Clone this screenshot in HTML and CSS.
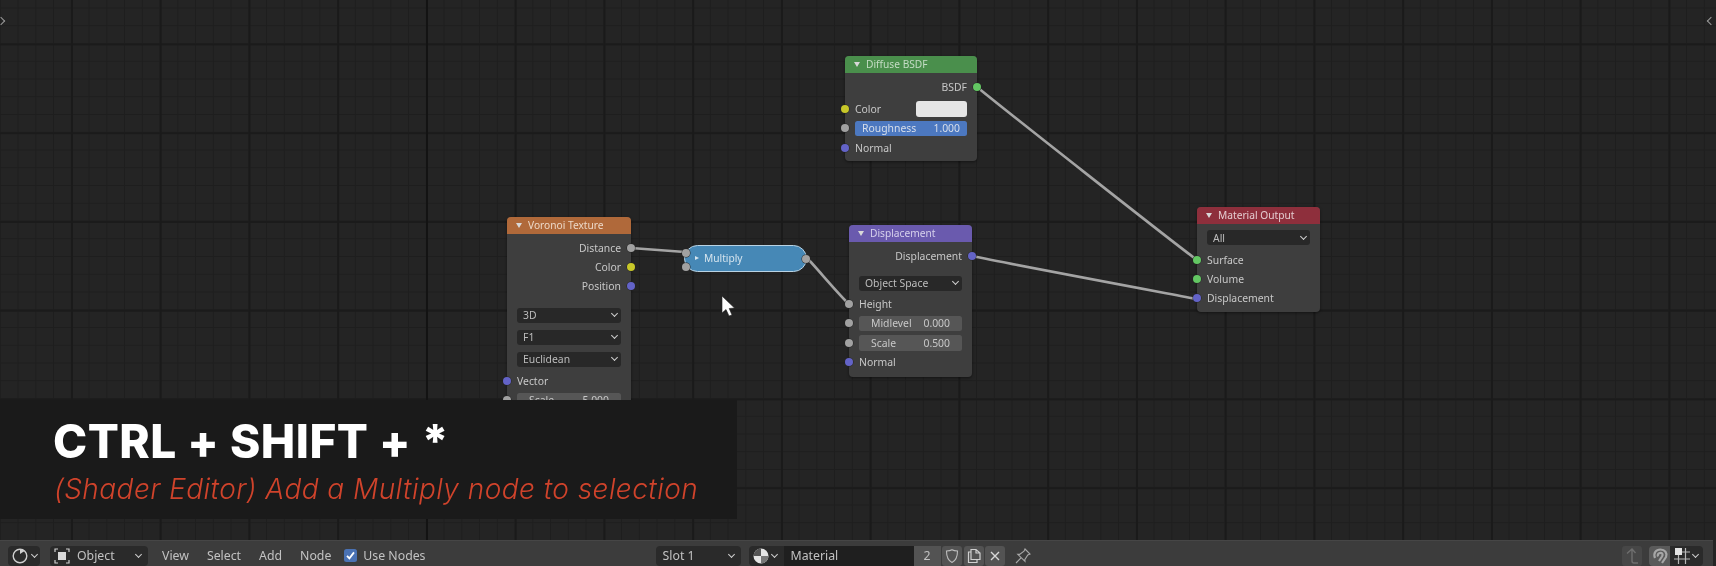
FILE: index.html
```html
<!DOCTYPE html>
<html lang="en">
<head>
<meta charset="utf-8">
<title>Shader Editor</title>
<link rel="stylesheet" href="styles.css">
</head>
<body>
<div class="app">
  <main class="canvas">
    <svg class="links" width="1716" height="540" viewBox="0 0 1716 540" fill="none">
      <path class="link" d="M631 248 L685 252"/>
      <path class="link" d="M807 258 C815 266 840 296 849 304"/>
      <path class="link" d="M977 87 C1000 106 1170 240 1197 260"/>
      <path class="link" d="M972 256 C1010 264 1160 292 1197 299"/>
    </svg>

    <span class="region-arrow region-arrow-left"></span>
    <span class="region-arrow region-arrow-right"></span>

    <section class="node node-diffuse">
      <header class="node-head head-green"><i class="tri"></i>Diffuse BSDF</header>
      <div class="node-body">
        <div class="row row-out">BSDF<b class="sock sock-r green"></b></div>
        <div class="row row-sp3"><b class="sock sock-l yellow"></b><span class="grow">Color</span><span class="swatch"></span></div>
        <div class="row"><b class="sock sock-l grey"></b><div class="field field-blue"><span>Roughness</span><span>1.000</span></div></div>
        <div class="row"><b class="sock sock-l blue"></b>Normal</div>
      </div>
    </section>

    <section class="node node-voronoi">
      <header class="node-head head-orange"><i class="tri"></i>Voronoi Texture</header>
      <div class="node-body">
        <div class="row row-out">Distance<b class="sock sock-r grey"></b></div>
        <div class="row row-out">Color<b class="sock sock-r yellow"></b></div>
        <div class="row row-out">Position<b class="sock sock-r blue"></b></div>
        <div class="row row-drop row-first"><div class="drop"><span>3D</span><i class="chev"></i></div></div>
        <div class="row row-drop"><div class="drop"><span>F1</span><i class="chev"></i></div></div>
        <div class="row row-drop"><div class="drop"><span>Euclidean</span><i class="chev"></i></div></div>
        <div class="row row-after-drop"><b class="sock sock-l blue"></b>Vector</div>
        <div class="row"><b class="sock sock-l grey"></b><div class="field"><span>Scale</span><span>5.000</span></div></div>
      </div>
    </section>

    <section class="reroute-node">
      <b class="sock sock-in1 grey"></b>
      <b class="sock sock-in2 grey"></b>
      <i class="tri-r"></i>Multiply
      <b class="sock sock-out grey"></b>
    </section>

    <section class="node node-disp">
      <header class="node-head head-purple"><i class="tri"></i>Displacement</header>
      <div class="node-body">
        <div class="row row-out">Displacement<b class="sock sock-r blue"></b></div>
        <div class="row row-drop row-disp-drop"><div class="drop"><span>Object Space</span><i class="chev"></i></div></div>
        <div class="row"><b class="sock sock-l grey"></b>Height</div>
        <div class="row"><b class="sock sock-l grey"></b><div class="field"><span>Midlevel</span><span>0.000</span></div></div>
        <div class="row"><b class="sock sock-l grey"></b><div class="field"><span>Scale</span><span>0.500</span></div></div>
        <div class="row"><b class="sock sock-l blue"></b>Normal</div>
      </div>
    </section>

    <section class="node node-output">
      <header class="node-head head-red"><i class="tri"></i>Material Output</header>
      <div class="node-body">
        <div class="row row-drop row-out-drop"><div class="drop"><span>All</span><i class="chev"></i></div></div>
        <div class="row"><b class="sock sock-l green"></b>Surface</div>
        <div class="row"><b class="sock sock-l green"></b>Volume</div>
        <div class="row"><b class="sock sock-l blue"></b>Displacement</div>
      </div>
    </section>

    <svg class="cursor" width="16" height="22" viewBox="0 0 16 22">
      <path d="M1 0 L1 17 L5 13.5 L8 20 L11 19 L8.2 12.5 L13.5 12 Z" fill="#fff" stroke="#222" stroke-width=".6"/>
    </svg>

    <aside class="caption">
      <h1 class="caption-title">CTRL + SHIFT + *</h1>
      <p class="caption-sub">(Shader Editor) Add a Multiply node to selection</p>
    </aside>
  </main>

  <footer class="toolbar">
    <div class="tb-widget tb-editor">
      <svg width="20" height="20" viewBox="0 0 20 20" fill="none" stroke="#cfcfcf" stroke-width="1.4"><circle cx="10" cy="10" r="6.8"/><path d="M10 3.2 A6.8 6.8 0 0 1 14.5 5 L10 8 Z" fill="#cfcfcf" stroke="none"/></svg>
      <i class="chev"></i>
    </div>
    <div class="tb-widget tb-object">
      <svg width="18" height="18" viewBox="0 0 18 18" fill="none" stroke="#cfcfcf" stroke-width="1.2"><rect x="5" y="5" width="8" height="8" fill="#d8d8d8" stroke="none"/><path d="M2 5V2H5M13 2H16V5M16 13V16H13M5 16H2V13"/></svg>
      <span class="grow">Object</span>
      <i class="chev"></i>
    </div>
    <nav class="tb-menu">
      <span>View</span>
      <span>Select</span>
      <span>Add</span>
      <span>Node</span>
    </nav>
    <label class="tb-check">
      <span class="checkbox">
        <svg width="13" height="13" viewBox="0 0 13 13" fill="none" stroke="#fff" stroke-width="1.8"><path d="M3 6.8 L5.4 9.4 L10 3.4"/></svg>
      </span>
      Use Nodes
    </label>
    <div class="tb-widget tb-slot"><span class="grow">Slot 1</span><i class="chev"></i></div>
    <div class="tb-widget tb-mat">
      <svg width="20" height="20" viewBox="0 0 20 20"><circle cx="10" cy="10" r="7.5" fill="#e4e4e4"/><path d="M10 2.5 A7.5 7.5 0 0 0 2.5 10 L10 10 Z" fill="#555"/><path d="M10 10 L17.5 10 A7.5 7.5 0 0 1 10 17.5 Z" fill="#777"/></svg>
      <i class="chev"></i>
    </div>
    <div class="tb-name">Material</div>
    <div class="tb-btn tb-count">2</div>
    <div class="tb-btn">
      <svg width="16" height="16" viewBox="0 0 16 16" fill="none" stroke="#bdbdbd" stroke-width="1.1"><path d="M2.5 3 C6 3 7 2.4 8 1.8 C9 2.4 10 3 13.5 3 C13.5 9 12 12.5 8 14.5 C4 12.5 2.5 9 2.5 3 Z"/></svg>
    </div>
    <div class="tb-btn">
      <svg width="16" height="16" viewBox="0 0 16 16" fill="none" stroke="#d0d0d0" stroke-width="1.2"><path d="M5 1.5H10L14 5V11.5H5Z M10 1.5V5H14"/><path d="M5 4H2.5V14.5H11V11.5"/></svg>
    </div>
    <div class="tb-btn">
      <svg width="14" height="14" viewBox="0 0 14 14" fill="none" stroke="#d8d8d8" stroke-width="1.4"><path d="M3 3 L11 11 M11 3 L3 11"/></svg>
    </div>
    <div class="tb-pin">
      <svg width="18" height="18" viewBox="0 0 18 18" fill="none" stroke="#a8a8a8" stroke-width="1.1"><path d="M11 2 L16 7 L13.8 8 L10.8 12.6 L11 14.4 L3.8 7.4 L5.6 7.4 L10 4.2 Z M7 10.8 L2 16"/></svg>
    </div>
    <div class="tb-spacer"></div>
    <div class="tb-btn tb-up">
      <svg width="16" height="18" viewBox="0 0 16 18" fill="none" stroke="#6e6e6e" stroke-width="1.4"><path d="M3 6.5 L8 2 L11.5 6 M8 2 V14 Q8 16 10 16 H14"/></svg>
    </div>
    <div class="tb-btn tb-magnet">
      <svg width="18" height="18" viewBox="0 0 18 18" fill="none" stroke="#a6a6a6" stroke-width="2.2"><path d="M4 11 C2 6 5 2.5 9.5 2.5 C14 2.5 16.5 6 15 10 L11 16 M8 14 L11 9.5 C12.5 7 11 5.8 9.5 5.8 C7.5 5.8 6.2 7.5 7 9.5"/></svg>
    </div>
    <div class="tb-widget tb-snap">
      <svg width="20" height="20" viewBox="0 0 20 20" fill="none" stroke="#b8b8b8" stroke-width="1.2"><rect x="3" y="2" width="7" height="7" fill="#e4e4e4" stroke="none"/><path d="M13.5 2V18M6.5 9V18M2 13H18M10 6H18"/></svg>
      <i class="chev"></i>
    </div>
  </footer>
</div>
</body>
</html>
```

FILE: styles.css
```css
* { box-sizing: border-box; }

html, body {
  margin: 0;
  width: 1716px;
  height: 566px;
  overflow: hidden;
  background: #242424;
}

.app {
  display: flex;
  flex-direction: column;
  width: 1716px;
  height: 566px;
  font-family: "Noto Sans", "Open Sans", sans-serif;
  filter: blur(0.45px);
  background-color: #242424;
}

.canvas {
  position: relative;
  flex: 0 0 540px;
  background-color: #242424;
  background-repeat: no-repeat, repeat, repeat, repeat, repeat;
  background-image:
    linear-gradient(90deg, #131313, #131313),
    linear-gradient(90deg, #1a1a1a 1.6px, transparent 1.6px),
    linear-gradient(#1b1b1b 1.6px, transparent 1.6px),
    linear-gradient(90deg, #1e1e1e 1.4px, transparent 1.4px),
    linear-gradient(#1e1e1e 1.4px, transparent 1.4px);
  background-size:
    2px 100%,
    88.75px 100%,
    100% 88.75px,
    17.75px 100%,
    100% 17.75px;
  background-position:
    425.5px 0,
    71px 0,
    0 43.5px,
    -0.2px 0,
    0 7.5px;
}

.links {
  position: absolute;
  inset: 0;
}

.link {
  stroke: #a4a4a4;
  stroke-width: 2.6;
}

.region-arrow {
  position: absolute;
  top: 18px;
  width: 6px;
  height: 6px;
  border-top: 1.4px solid #9a9a9a;
  border-right: 1.4px solid #9a9a9a;
}

.region-arrow-left {
  left: -2px;
  transform: rotate(45deg);
}

.region-arrow-right {
  left: 1708px;
  transform: rotate(-135deg);
}

/* Nodes */
.node {
  position: absolute;
  background: #3e3e3e;
  border-radius: 4px;
  font-size: 10.4px;
  color: #c8c8c8;
  box-shadow: 0 1px 3px rgba(0, 0, 0, .45);
}

.node-diffuse { left: 845px; top: 56px; width: 132px; height: 105px; }
.node-voronoi { left: 507px; top: 217px; width: 124px; height: 230px; }
.node-disp    { left: 849px; top: 225px; width: 123px; height: 152px; }
.node-output  { left: 1197px; top: 207px; width: 123px; height: 105px; }

.node-head {
  display: flex;
  align-items: center;
  height: 17px;
  padding: 0 0 1px 9px;
  border-radius: 4px 4px 0 0;
  font-size: 10.2px;
}

.head-green  { background: #4a8f4c; color: #c4dcc4; }
.head-orange { background: #b0693a; color: #ecd8c8; }
.head-purple { background: #6a5aae; color: #d6d0ec; }
.head-red    { background: #8e2f3c; color: #e4ccd0; }

.tri {
  width: 0;
  height: 0;
  margin-right: 6px;
  border-left: 3px solid transparent;
  border-right: 3px solid transparent;
  border-top: 5px solid #d8d8d8;
}

.node-body {
  display: flex;
  flex-direction: column;
  padding-top: 4px;
}

.row {
  position: relative;
  display: flex;
  align-items: center;
  height: 19.4px;
  padding: 0 10px;
  white-space: nowrap;
}

.row-out { justify-content: flex-end; }
.row-sp3 { margin-top: 3px; }
.row-drop { height: 22px; }
.row-first { margin-top: 8px; }
.row-after-drop { margin-top: 1px; }
.row-disp-drop { margin-top: 7px; }
.row-out-drop { align-items: flex-start; padding-top: 2px; }

.grow { flex: 1; }

.swatch {
  width: 51px;
  height: 16px;
  background: #e6e6e6;
  border-radius: 3px;
}

.field {
  display: flex;
  flex: 1;
  justify-content: space-between;
  align-items: center;
  height: 15.5px;
  padding: 0 12px;
  background: #565656;
  border-radius: 2.5px;
}

.field-blue {
  padding: 0 7px;
  background: #4c78c0;
  color: #d8dfea;
}

.drop {
  display: flex;
  flex: 1;
  justify-content: space-between;
  align-items: center;
  height: 15px;
  padding: 0 4px 0 6px;
  background: #282828;
  border-radius: 3px;
  color: #bdbdbd;
}

.chev {
  display: block;
  width: 5px;
  height: 5px;
  margin-top: -3px;
  border-right: 1.2px solid #cfcfcf;
  border-bottom: 1.2px solid #cfcfcf;
  transform: rotate(45deg);
}

.sock {
  position: absolute;
  width: 8px;
  height: 8px;
  border-radius: 50%;
  box-shadow: 0 0 0 .5px #222;
}

.sock-r { right: -4px; top: 50%; margin-top: -4px; }
.sock-l { left: -4px; top: 50%; margin-top: -4px; }

.green  { background: #63c763; }
.yellow { background: #c7c729; }
.grey   { background: #a1a1a1; }
.blue   { background: #6363c7; }

/* Collapsed node */
.reroute-node {
  position: absolute;
  left: 684px;
  top: 245px;
  display: flex;
  align-items: center;
  width: 123px;
  height: 27px;
  padding: 0 0 2px 10px;
  background: #4688b6;
  border: 1px solid #b9d3e4;
  border-radius: 13.5px;
  color: #d5e4ee;
  font-size: 10.2px;
}

.tri-r {
  width: 0;
  height: 0;
  margin-right: 5px;
  border-top: 2.5px solid transparent;
  border-bottom: 2.5px solid transparent;
  border-left: 4.5px solid #d5e4ee;
}

.sock-in1 { left: -3px; top: 3px; }
.sock-in2 { left: -3px; top: 16.5px; }
.sock-out { right: -4px; top: 9px; }

.cursor {
  position: absolute;
  left: 721px;
  top: 296px;
}

/* Caption */
.caption {
  position: absolute;
  left: 0;
  top: 400px;
  z-index: 5;
  width: 737px;
  height: 119px;
  padding: 16px 0 0 53px;
  background: #1a1a1a;
}

.caption-title {
  margin: 0;
  font: 800 46px/50px Inter, sans-serif;
  letter-spacing: .5px;
  color: #fff;
  white-space: nowrap;
}

.caption-sub {
  margin: 6px 0 0 1px;
  font: italic 300 28px/34px Inter, sans-serif;
  letter-spacing: .45px;
  color: #d0432b;
  white-space: nowrap;
}

/* Toolbar */
.toolbar {
  display: flex;
  align-items: flex-start;
  flex: 0 0 26px;
  width: 1713px;
  padding: 4.5px 0 0 8px;
  background: #3c3c3c;
  border-top: 1px solid #464646;
  font-size: 12.3px;
  color: #c2c2c2;
  overflow: hidden;
}

.tb-widget {
  display: flex;
  align-items: center;
  height: 20px;
  background: #2a2a2a;
  border-radius: 4px;
}

.tb-widget .chev { flex: none; }

.tb-editor {
  gap: 2px;
  width: 32px;
  padding-left: 2px;
}

.tb-object {
  gap: 6px;
  width: 98px;
  margin-left: 10px;
  padding: 0 7px 0 3px;
}

.tb-menu {
  display: flex;
  gap: 18px;
  align-items: center;
  height: 20px;
  margin-left: 14px;
}

.tb-check {
  display: flex;
  gap: 6px;
  align-items: center;
  height: 20px;
  margin-left: 13px;
}

.checkbox {
  display: flex;
  align-items: center;
  justify-content: center;
  width: 13px;
  height: 13px;
  background: #4a72b4;
  border-radius: 2.5px;
}

.tb-slot {
  width: 85px;
  margin-left: 230px;
  padding: 0 7px;
}

.tb-mat {
  gap: 1px;
  width: 35px;
  margin-left: 8px;
  padding-left: 2px;
  border-radius: 4px 0 0 4px;
}

.tb-name {
  display: flex;
  align-items: center;
  width: 130px;
  height: 20px;
  padding-left: 7px;
  background: #1f1f1f;
}

.tb-btn {
  display: flex;
  align-items: center;
  justify-content: center;
  width: 20px;
  height: 20px;
  margin-left: 1.5px;
  background: #535353;
  border-radius: 3px;
}

.tb-count {
  width: 27px;
  margin-left: 0;
  border-radius: 0;
}

.tb-pin {
  display: flex;
  align-items: center;
  justify-content: center;
  width: 20px;
  height: 20px;
  margin-left: 8px;
}

.tb-spacer { flex: 1; }

.tb-up {
  background: #474747;
  margin-right: 7px;
}

.tb-magnet {
  width: 21px;
  margin: 0;
  background: #5a5a5a;
  border-radius: 4px 0 0 4px;
}

.tb-snap {
  gap: 1px;
  width: 33px;
  margin-right: 10px;
  padding-left: 2px;
  border-radius: 0 4px 4px 0;
}
```
